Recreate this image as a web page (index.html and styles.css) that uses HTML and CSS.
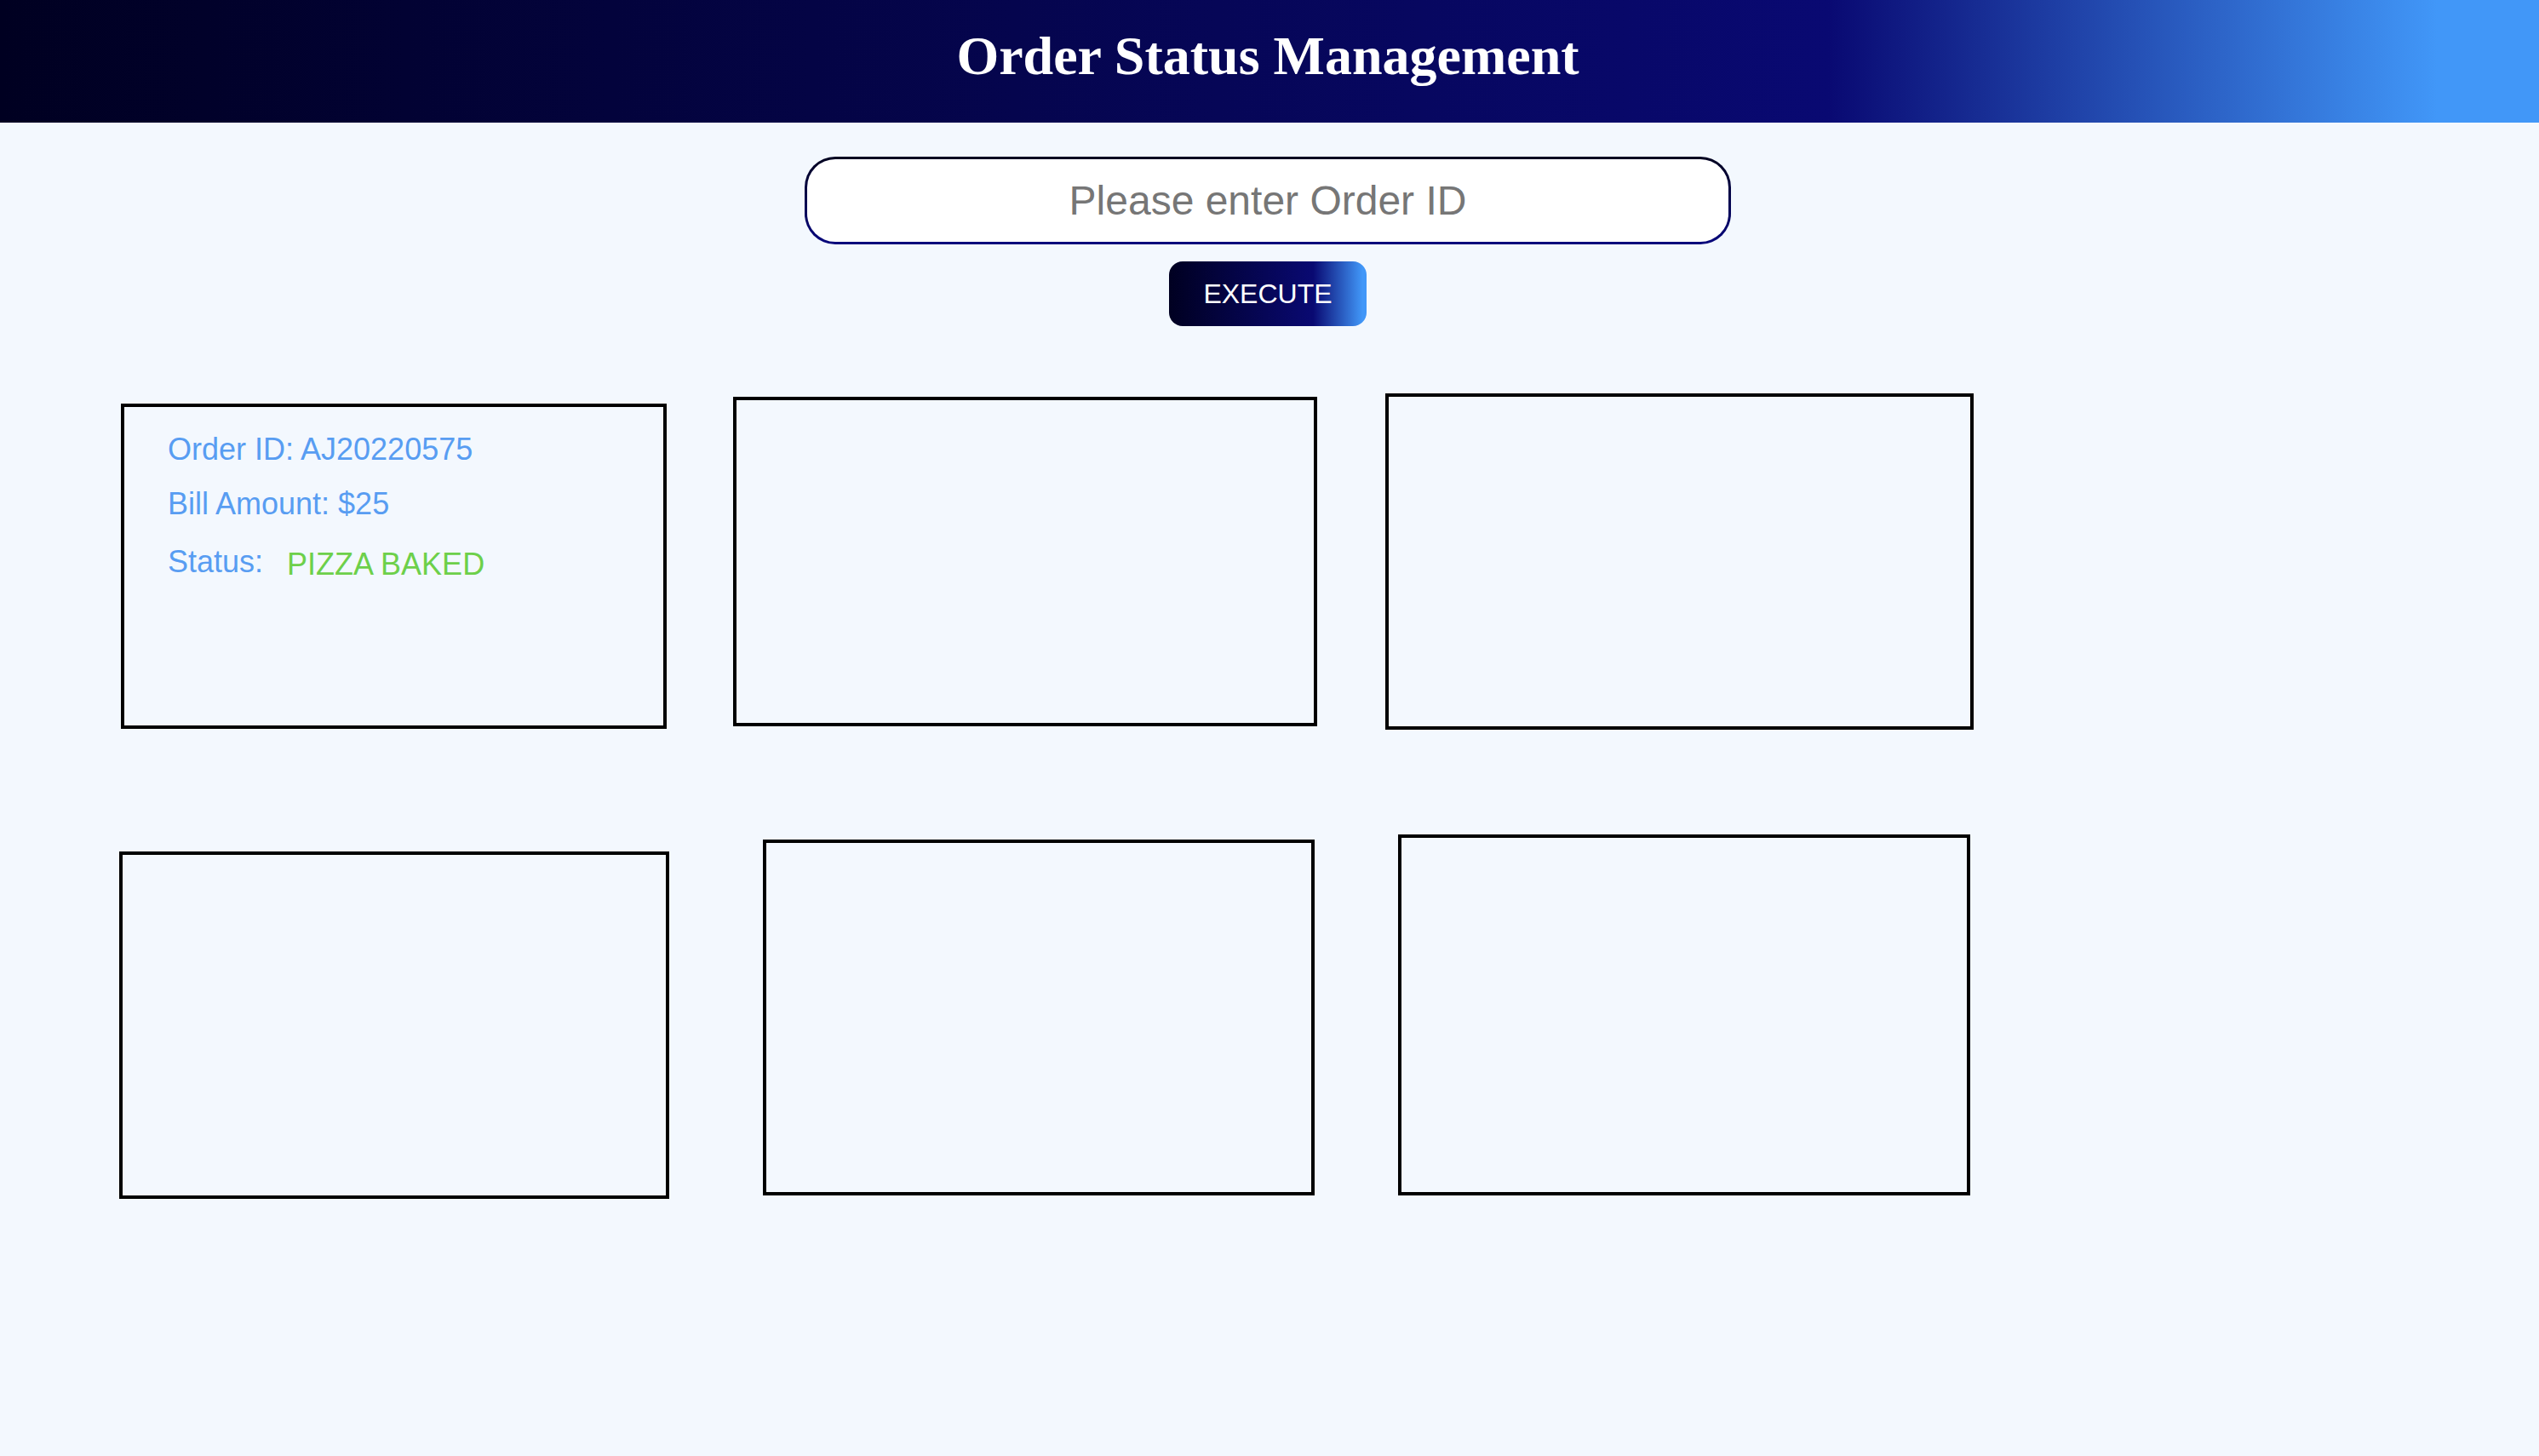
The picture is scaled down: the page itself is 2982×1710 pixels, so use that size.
FILE: index.html
```html
<!DOCTYPE html>
<html lang="en">
<head>
<meta charset="utf-8">
<title>Order Status Management</title>
<link rel="stylesheet" href="styles.css">
</head>
<body>
<header class="topbar">
  <h1 class="title">Order Status Management</h1>
</header>
<main class="main">
  <form class="search">
    <input class="search-input" type="text" placeholder="Please enter Order ID">
    <button class="execute" type="button">EXECUTE</button>
  </form>
  <section class="cards">
    <div class="row row-1">
      <div class="card c1">
        <div class="line">Order ID: AJ20220575</div>
        <div class="line l2">Bill Amount: $25</div>
        <div class="line l3"><span>Status:</span><span class="status">PIZZA BAKED</span></div>
      </div>
      <div class="card c2"></div>
      <div class="card c3"></div>
    </div>
    <div class="row row-2">
      <div class="card c4"></div>
      <div class="card c5"></div>
      <div class="card c6"></div>
    </div>
  </section>
</main>
</body>
</html>
```
FILE: styles.css
```css
html, body {
  margin: 0;
  padding: 0;
}
body {
  background: #f3f8fe;
  font-family: "Liberation Sans", Arial, sans-serif;
  width: 2982px;
  min-height: 1710px;
}
.topbar {
  box-sizing: border-box;
  height: 144px;
  padding-top: 30px;
  padding-right: 4px;
  background: linear-gradient(to right, #000021 0%, #090972 72%, #4197f8 96%, #4197f8 100%);
  text-align: center;
}
.title {
  margin: 0;
  font-family: "Liberation Serif", "Times New Roman", serif;
  font-weight: bold;
  font-size: 64px;
  line-height: 72px;
  color: #ffffff;
}
.search {
  display: flex;
  flex-direction: column;
  align-items: center;
  padding-top: 40px;
  padding-right: 4px;
  margin: 0;
}
.search-input {
  box-sizing: border-box;
  width: 1088px;
  height: 103px;
  border: 3px solid transparent;
  border-radius: 36px;
  background: linear-gradient(#ffffff, #ffffff) padding-box,
              linear-gradient(to bottom, #00001f, #07077d) border-box;
  font-family: "Liberation Sans", Arial, sans-serif;
  font-size: 48px;
  text-align: center;
  color: #333;
  outline: none;
  padding: 0 20px;
}
.search-input::placeholder {
  color: #767676;
}
.execute {
  box-sizing: border-box;
  margin-top: 20px;
  width: 232px;
  height: 76px;
  border: none;
  border-radius: 16px;
  background: linear-gradient(to right, #000021 0%, #090972 73%, #4197f8 98%);
  color: #ffffff;
  font-family: "Liberation Sans", Arial, sans-serif;
  font-size: 32px;
  padding: 0;
}
.cards {
  padding-top: 79px;
}
.row {
  display: flex;
  align-items: flex-start;
}
.row-2 {
  margin-top: 123px;
}
.card {
  box-sizing: border-box;
  border: 4px solid #000;
  flex: none;
}
.c1 { width: 641px; height: 382px; margin-left: 142px; margin-top: 12px; }
.c2 { width: 686px; height: 387px; margin-left: 78px; margin-top: 4px; }
.c3 { width: 691px; height: 395px; margin-left: 80px; }
.c4 { width: 646px; height: 408px; margin-left: 140px; margin-top: 20px; }
.c5 { width: 648px; height: 418px; margin-left: 110px; margin-top: 6px; }
.c6 { width: 672px; height: 424px; margin-left: 98px; }

.c1 {
  display: flex;
  flex-direction: column;
  padding: 29px 0 0 51px;
}
.line {
  font-size: 36px;
  line-height: 42px;
  color: #589df2;
  display: flex;
  gap: 28px;
}
.l2 { margin-top: 22px; }
.l3 { margin-top: 26px; }
.status {
  color: #6dd04a;
  transform: translateY(3px);
}
```
